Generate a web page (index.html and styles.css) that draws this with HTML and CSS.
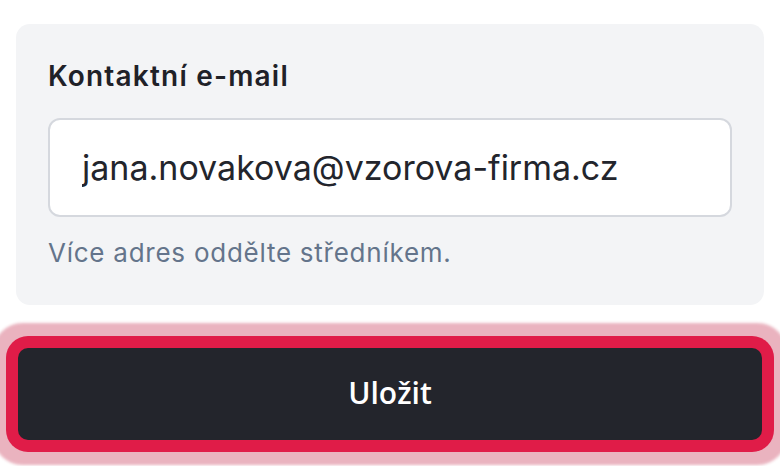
FILE: index.html
```html
<!DOCTYPE html>
<html lang="cs">
<head>
<meta charset="utf-8">
<title>Kontaktní e-mail</title>
<link rel="stylesheet" href="styles.css">
</head>
<body>
<main class="page">
  <section class="card">
    <label class="label" for="email">Kontaktní e-mail</label>
    <input id="email" class="input" type="text" value="jana.novakova@vzorova-firma.cz">
    <p class="hint">Více adres oddělte středníkem.</p>
  </section>
  <div class="actions">
    <button class="save" type="button">Uložit</button>
  </div>
</main>
</body>
</html>
```

FILE: styles.css
```css
html, body {
  margin: 0;
  background: #ffffff;
}
body {
  font-family: Inter, "Noto Sans", sans-serif;
  height: 466px;
  overflow: hidden;
}
.page {
  padding: 24px 16px 0;
}
.card {
  background: #f3f4f6;
  border-radius: 14px;
  padding: 32px 32px 34px;
  display: flex;
  flex-direction: column;
}
.label {
  font-size: 28px;
  font-weight: 600;
  line-height: 40px;
  letter-spacing: 1.2px;
  color: #1f2128;
}
.input {
  margin-top: 22px;
  height: 99px;
  box-sizing: border-box;
  border: 2px solid #d5d8de;
  border-radius: 12px;
  background: #ffffff;
  padding: 0 32px;
  font-family: Inter, "Noto Sans", sans-serif;
  font-size: 34px;
  letter-spacing: 0;
  color: #23252c;
  outline: none;
}
.hint {
  margin: 18px 0 0;
  font-size: 26px;
  line-height: 36px;
  letter-spacing: 0.75px;
  color: #64748b;
}
.actions {
  margin-top: 43px;
  padding: 0 2px;
}
.save {
  display: block;
  width: 100%;
  height: 92px;
  padding: 0 0 4px;
  border: none;
  border-radius: 10px;
  background: #23252c;
  color: #ffffff;
  font-family: "Open Sans", "Noto Sans", sans-serif;
  font-size: 30px;
  font-weight: 600;
  box-shadow: 0 0 0 12px #e01c48, 0 0 3px 25px rgba(190, 24, 60, 0.33);
}
```
